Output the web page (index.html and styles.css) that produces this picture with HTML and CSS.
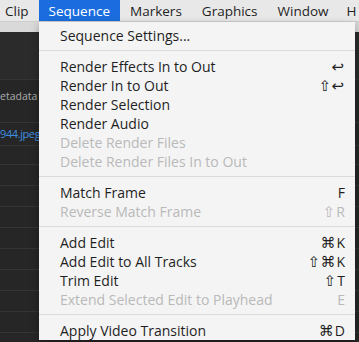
FILE: index.html
```html
<!DOCTYPE html>
<html lang="en">
<head>
    <meta charset="UTF-8">
    <title>Sequence Menu</title>
    <link rel="stylesheet" href="styles.css">
</head>
<body>
    <div class="menu-bar">
        <span class="bar-item">Clip</span>
        <span class="bar-item active">Sequence</span>
        <span class="bar-item">Markers</span>
        <span class="bar-item">Graphics</span>
        <span class="bar-item">Window</span>
        <span class="bar-item last">H</span>
    </div>

    <div class="workspace">
        <div class="tool-strip"></div>
        <div class="panel">
            <div class="panel-row top"></div>
            <div class="panel-row meta">etadata</div>
            <div class="panel-row file">944.jpeg</div>
            <div class="panel-row first"></div>
            <div class="panel-row"></div>
            <div class="panel-row"></div>
            <div class="panel-row"></div>
            <div class="panel-row"></div>
            <div class="panel-row"></div>
            <div class="panel-row"></div>
            <div class="panel-row"></div>
            <div class="panel-row"></div>
        </div>
    </div>

    <div class="dropdown">
        <div class="item">Sequence Settings...</div>
        <div class="sep"></div>
        <div class="item">Render Effects In to Out <span class="key"><i class="sym">&#x21A9;</i></span></div>
        <div class="item">Render In to Out <span class="key"><i class="sym">&#x21E7;&#x21A9;</i></span></div>
        <div class="item">Render Selection</div>
        <div class="item">Render Audio</div>
        <div class="item off">Delete Render Files</div>
        <div class="item off">Delete Render Files In to Out</div>
        <div class="sep"></div>
        <div class="item">Match Frame <span class="key">F</span></div>
        <div class="item off">Reverse Match Frame <span class="key"><i class="sym">&#x21E7;</i>R</span></div>
        <div class="sep"></div>
        <div class="item">Add Edit <span class="key"><i class="sym">&#x2318;</i>K</span></div>
        <div class="item">Add Edit to All Tracks <span class="key"><i class="sym">&#x21E7;&#x2318;</i>K</span></div>
        <div class="item">Trim Edit <span class="key"><i class="sym">&#x21E7;</i>T</span></div>
        <div class="item off">Extend Selected Edit to Playhead <span class="key">E</span></div>
        <div class="sep"></div>
        <div class="item">Apply Video Transition <span class="key"><i class="sym">&#x2318;</i>D</span></div>
    </div>
</body>
</html>
```

FILE: styles.css
```css
:root {
    --bar: #e8e8e8;
    --menu: #f4f4f4;
    --ink: #1f1f1f;
    --dim: #b9b9b9;
    --blue: #1b6ddf;
    --dark: #262626;
}

body {
    margin: 0;
    background: var(--dark);
    font-family: 'Open Sans', 'Liberation Sans', sans-serif;
    font-size: 14px;
    overflow: hidden;
    height: 342px;
}

.menu-bar {
    display: flex;
    height: 22px;
    margin-left: -5px;
    background: var(--bar);
    border-bottom: 1px solid #cfcfcf;
    box-sizing: border-box;
    color: var(--ink);
    font-size: 13.5px;
    white-space: nowrap;
}

.bar-item {
    padding: 0 10px;
    line-height: 22px;
}

.bar-item.last {
    padding-left: 8px;
}

.bar-item.active {
    background: var(--blue);
    color: #fff;
}

.tool-strip {
    height: 10px;
    background: #d9d9d9;
}

.panel {
    display: flex;
    flex-direction: column;
    color: #acacac;
    font-size: 10.5px;
}

.panel-row {
    height: 20px;
    border-bottom: 1px solid #343434;
    white-space: nowrap;
}

.panel-row.top {
    height: 47px;
    background: #2b2b2b;
}

.panel-row.meta {
    height: 43px;
    line-height: 18px;
    padding-top: 7px;
    box-sizing: border-box;
}

.panel-row.file {
    color: #3d8fe0;
    font-size: 11px;
    letter-spacing: -0.4px;
    height: 22px;
    line-height: 22px;
}

.panel-row.first {
    height: 18px;
}

.dropdown {
    position: absolute;
    left: 39px;
    top: 22px;
    width: 316px;
    padding-top: 4px;
    background: var(--menu);
    color: var(--ink);
    box-shadow: 0 3px 8px rgba(0, 0, 0, 0.3);
}

.item {
    display: flex;
    justify-content: space-between;
    height: 19px;
    line-height: 19px;
    padding: 0 10px 0 21px;
    white-space: nowrap;
}

.item.off {
    color: var(--dim);
}

.key {
    font-size: 14px;
}

.sym {
    font-style: normal;
    font-family: 'DejaVu Sans', sans-serif;
    font-size: 15px;
    margin-right: 1px;
}

.sep {
    height: 1px;
    margin: 5px 0 6px;
    background: #dadada;
}
```
